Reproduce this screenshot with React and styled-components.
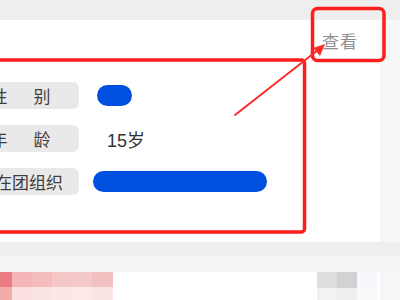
import React from 'react';
import styled, { createGlobalStyle } from 'styled-components';

const GlobalStyle = createGlobalStyle`
  html, body {
    margin: 0;
    padding: 0;
    background: #f5f5f5;
  }
  body {
    font-family: "Noto Sans CJK SC", "Noto Sans", sans-serif;
  }
`;

const Page = styled.div`
  position: relative;
  width: 400px;
  height: 300px;
  overflow: hidden;
  background: #f6f6f6;
`;

const TopStrip = styled.div`
  height: 20px;
  background: #eeeeee;
`;

const Card = styled.div`
  width: 380px;
  height: 222px;
  background: #ffffff;
  overflow: hidden;
`;

const Header = styled.div`
  height: 40px;
  display: flex;
  align-items: center;
  justify-content: flex-end;
  padding-right: 22px;
`;

const ViewLink = styled.span`
  font-size: 17px;
  color: #8f8f8f;
  letter-spacing: 1px;
`;

const InfoList = styled.div`
  display: flex;
  flex-direction: column;
  gap: 16px;
  padding-top: 22px;
`;

const Row = styled.div`
  display: flex;
  align-items: center;
  height: 27px;
`;

const Label = styled.div`
  flex: none;
  margin-left: -30px;
  width: 101px;
  padding-right: 8px;
  height: 27px;
  border-radius: 6px;
  background: #e9e9e9;
  display: flex;
  align-items: center;
  justify-content: center;
  gap: ${(p) => p.$gap || 0}px;
  font-size: 17px;
  color: #3f3f3f;
  white-space: nowrap;
`;

const Value = styled.div`
  margin-left: ${(p) => p.$offset}px;
  font-size: 18px;
  color: #333333;
  font-family: "Liberation Sans", "Noto Sans CJK SC", sans-serif;
`;

const Pill = styled.div`
  width: ${(p) => p.$w}px;
  height: 21px;
  border-radius: 11px;
  background: #0050e0;
`;

const GrayBand = styled.div`
  height: 14px;
  background: #eeeeee;
`;

const LightBand = styled.div`
  height: 16px;
  background: #f4f4f4;
`;

const BottomCard = styled.div`
  width: 380px;
  height: 40px;
  background: #ffffff;
  display: flex;
  justify-content: space-between;
`;

const Mosaic = styled.div`
  display: flex;
  flex-direction: column;
  margin-right: ${(p) => p.$right || 0}px;
`;

const MosaicRow = styled.div`
  display: flex;
  height: ${(p) => p.$h}px;
`;

const Block = styled.div`
  width: ${(p) => p.$w}px;
  background: ${(p) => p.$c};
`;

const Overlay = styled.svg`
  position: absolute;
  left: 0;
  top: 0;
  pointer-events: none;
`;

const rows = [
  { label: ['性', '别'], gap: 26, value: <Pill $w={35} />, offset: 18 },
  { label: ['年', '龄'], gap: 26, value: '15岁', offset: 28 },
  { label: ['所在团组织'], gap: 0, value: <Pill $w={174} />, offset: 14 },
];

const redTop = [
  [12, '#ec7c84'],
  [20, '#f4b6b6'],
  [20, '#f4bcbc'],
  [21, '#f5c7c7'],
  [19, '#f4c9c9'],
  [21, '#f2c0c0'],
];
const redBottom = [
  [12, '#f2aaaa'],
  [20, '#fbe0e0'],
  [20, '#fce4e4'],
  [21, '#fde6e6'],
  [19, '#fde7e7'],
  [21, '#fce4e4'],
];
const grayTop = [
  [20, '#dedede'],
  [20, '#d2d2d2'],
  [20, '#f6f8fb'],
];
const grayBottom = [
  [20, '#f2f2f2'],
  [20, '#efefef'],
  [20, '#fafafa'],
];

const Blocks = ({ items }) =>
  items.map(([w, c], i) => <Block key={i} $w={w} $c={c} />);

export default function App() {
  return (
    <Page>
      <GlobalStyle />
      <TopStrip />
      <Card>
        <Header>
          <ViewLink>查看</ViewLink>
        </Header>
        <InfoList>
          {rows.map((r, i) => (
            <Row key={i}>
              <Label $gap={r.gap}>
                {r.label.map((t) => (
                  <span key={t}>{t}</span>
                ))}
              </Label>
              <Value $offset={r.offset}>{r.value}</Value>
            </Row>
          ))}
        </InfoList>
      </Card>
      <GrayBand />
      <LightBand />
      <BottomCard>
        <Mosaic>
          <MosaicRow $h={15}>
            <Blocks items={redTop} />
          </MosaicRow>
          <MosaicRow $h={13}>
            <Blocks items={redBottom} />
          </MosaicRow>
        </Mosaic>
        <Mosaic $right={3}>
          <MosaicRow $h={16}>
            <Blocks items={grayTop} />
          </MosaicRow>
          <MosaicRow $h={12}>
            <Blocks items={grayBottom} />
          </MosaicRow>
        </Mosaic>
      </BottomCard>

      <Overlay width="400" height="300" viewBox="0 0 400 300">
        <rect x="-10" y="60" width="314.5" height="172" rx="3" fill="none" stroke="#ff1c1c" strokeWidth="3.5" />
        <rect x="312.5" y="8.5" width="71.5" height="52" rx="5" fill="none" stroke="#ff1c1c" strokeWidth="3.5" />
        <line x1="235" y1="115" x2="318" y2="50" stroke="#ff2a2a" strokeWidth="2" strokeLinecap="round" />
        <polygon points="325,44 313,48 320,56" fill="#ff2a2a" />
      </Overlay>
    </Page>
  );
}
